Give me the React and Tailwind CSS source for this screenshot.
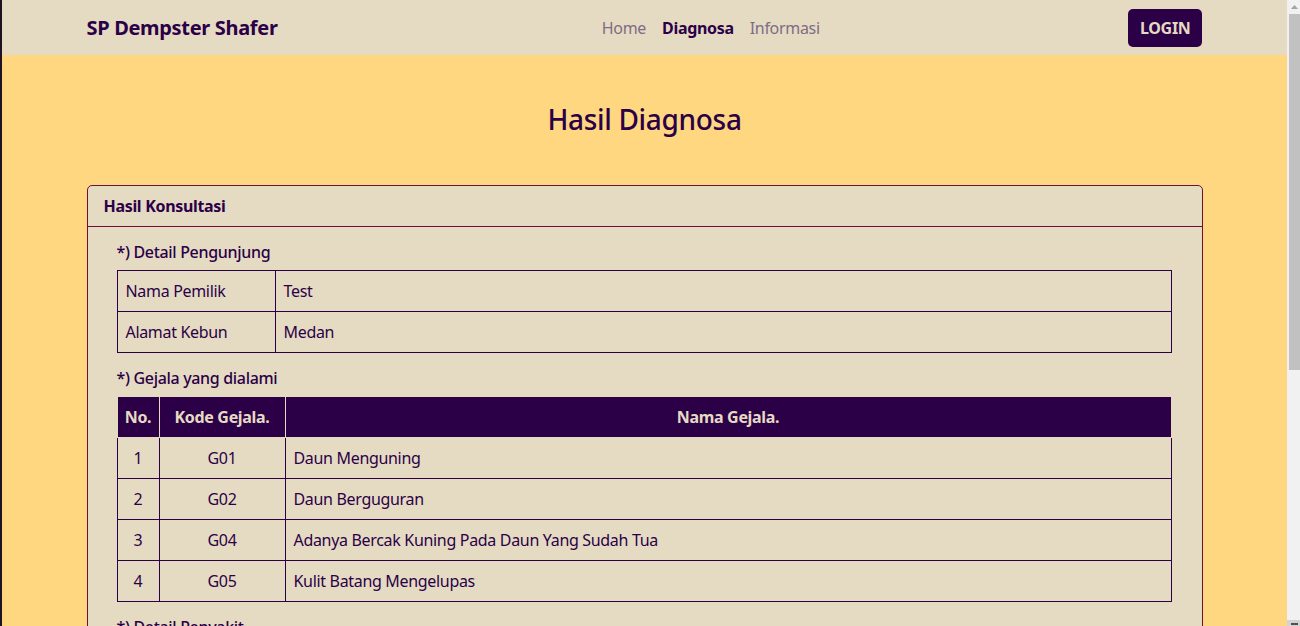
import React from "react";

const gejala = [
  { no: 1, kode: "G01", nama: "Daun Menguning" },
  { no: 2, kode: "G02", nama: "Daun Berguguran" },
  { no: 3, kode: "G04", nama: "Adanya Bercak Kuning Pada Daun Yang Sudah Tua" },
  { no: 4, kode: "G05", nama: "Kulit Batang Mengelupas" },
];

function Navbar() {
  return (
    <nav className="h-[55px] bg-[#e5dbc3] flex items-center">
      <div className="w-[1116px] mx-auto flex items-center">
        <a className="mr-4 text-[20px] font-bold text-[#2b0047] leading-[30px]">SP Dempster Shafer</a>
        <ul className="mx-auto flex items-center text-[16px] leading-6">
          <li className="px-2 text-[#806c84]">Home</li>
          <li className="px-2 font-bold text-[#2b0047]">Diagnosa</li>
          <li className="px-2 text-[#806c84]">Informasi</li>
        </ul>
        <button className="h-[38px] px-3 rounded-[5px] bg-[#2b0047] text-[#e5dbc3] font-bold text-[16px] tracking-[-0.02em]">LOGIN</button>
      </div>
    </nav>
  );
}

function Scrollbar() {
  return (
    <div className="w-[13px] bg-[#f1f1f1] flex flex-col tracking-normal">
      <div className="h-[14px] flex items-center justify-center pl-[2px]">
        <svg width="7" height="4" viewBox="0 0 7 4">
          <path d="M3.5 0 L7 4 L0 4 Z" fill="#a3a3a3" />
        </svg>
      </div>
      <div className="h-[356px] ml-[2px] bg-[#c1c1c1]" />
      <div className="flex-1" />
      <div className="h-[6px] bg-[#d3d3d3] flex items-end justify-center pl-[2px]">
        <div className="w-[7px] h-[2px] bg-[#505050] mb-[1px]" />
      </div>
    </div>
  );
}

export default function App() {
  return (
    <div
      className="flex h-[626px] overflow-hidden bg-[#ffd780] text-[#2b0047] tracking-[-0.02em]"
      style={{ fontFamily: '"Noto Sans", "Open Sans", sans-serif' }}
    >
      <div className="w-[2px] bg-[#1d1420]" />
      <div className="flex-1 min-w-0">
        <Navbar />
        <main className="w-[1116px] mx-auto">
          <h3 className="my-12 text-center text-[28px] font-medium leading-[1.2]">Hasil Diagnosa</h3>
          <div className="border border-[#6d0f36] rounded-[5px] bg-[#e5dbc3]">
            <div className="px-4 py-2 border-b border-[#6d0f36] font-bold text-[16px] leading-6">Hasil Konsultasi</div>
            <div className="pl-[29px] pr-[30px] pt-[13px] pb-6 text-[16px] leading-6">
              <p className="font-medium">*) Detail Pengunjung</p>
              <table className="w-full mt-[6px] border-collapse table-fixed">
                <tbody>
                  <tr>
                    <td className="w-[158px] border border-[#2b0047] px-2 py-2">Nama Pemilik</td>
                    <td className="border border-[#2b0047] px-2 py-2">Test</td>
                  </tr>
                  <tr>
                    <td className="border border-[#2b0047] px-2 py-2">Alamat Kebun</td>
                    <td className="border border-[#2b0047] px-2 py-2">Medan</td>
                  </tr>
                </tbody>
              </table>
              <p className="font-medium mt-[13px]">*) Gejala yang dialami</p>
              <table className="w-full mt-[6px] border-collapse table-fixed">
                <thead>
                  <tr className="bg-[#2b0047] text-[#e5dbc3]">
                    <th className="w-[42px] border border-[#e5dbc3] px-1 py-2 font-bold text-center">No.</th>
                    <th className="w-[126px] border border-[#e5dbc3] px-2 py-2 font-bold text-center">Kode Gejala.</th>
                    <th className="border border-[#e5dbc3] px-2 py-2 font-bold text-center">Nama Gejala.</th>
                  </tr>
                </thead>
                <tbody>
                  {gejala.map((g) => (
                    <tr key={g.no}>
                      <td className="border border-[#2b0047] px-2 py-2 text-center">{g.no}</td>
                      <td className="border border-[#2b0047] px-2 py-2 text-center">{g.kode}</td>
                      <td className="border border-[#2b0047] px-2 py-2">{g.nama}</td>
                    </tr>
                  ))}
                </tbody>
              </table>
              <p className="font-medium mt-[13px]">*) Detail Penyakit</p>
            </div>
          </div>
        </main>
      </div>
      <Scrollbar />
    </div>
  );
}
